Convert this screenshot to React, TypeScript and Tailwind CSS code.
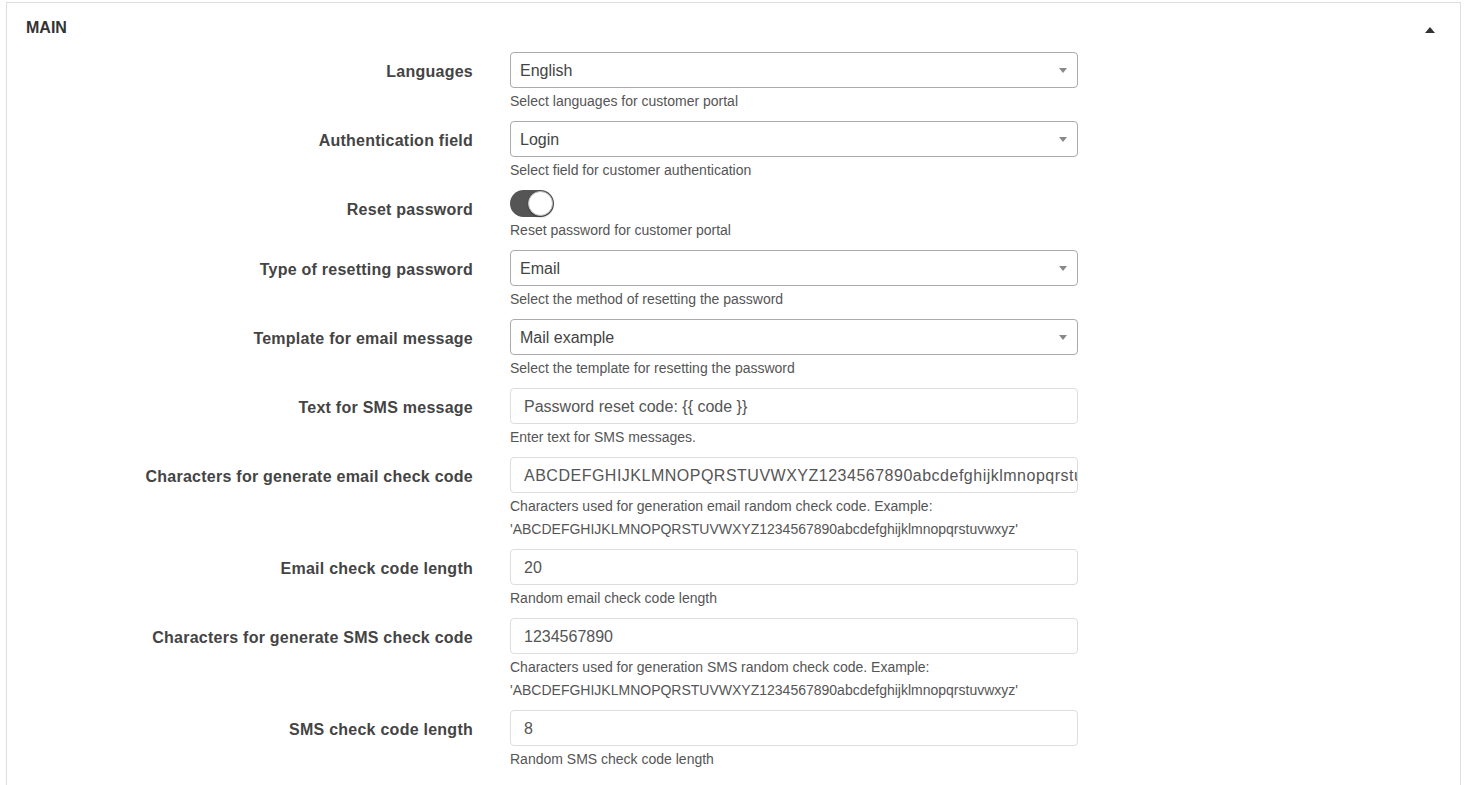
import React from 'react';

type Field = {
  label: string;
  kind: 'select' | 'text' | 'toggle';
  value?: string;
  wide?: boolean;
  help: string[];
};

const fields: Field[] = [
  { label: 'Languages', kind: 'select', value: 'English', help: ['Select languages for customer portal'] },
  { label: 'Authentication field', kind: 'select', value: 'Login', help: ['Select field for customer authentication'] },
  { label: 'Reset password', kind: 'toggle', help: ['Reset password for customer portal'] },
  { label: 'Type of resetting password', kind: 'select', value: 'Email', help: ['Select the method of resetting the password'] },
  { label: 'Template for email message', kind: 'select', value: 'Mail example', help: ['Select the template for resetting the password'] },
  { label: 'Text for SMS message', kind: 'text', value: 'Password reset code: {{ code }}', help: ['Enter text for SMS messages.'] },
  {
    label: 'Characters for generate email check code',
    kind: 'text',
    value: 'ABCDEFGHIJKLMNOPQRSTUVWXYZ1234567890abcdefghijklmnopqrstuvwxyz',
    wide: true,
    help: ['Characters used for generation email random check code. Example:', "'ABCDEFGHIJKLMNOPQRSTUVWXYZ1234567890abcdefghijklmnopqrstuvwxyz'"],
  },
  { label: 'Email check code length', kind: 'text', value: '20', help: ['Random email check code length'] },
  {
    label: 'Characters for generate SMS check code',
    kind: 'text',
    value: '1234567890',
    help: ['Characters used for generation SMS random check code. Example:', "'ABCDEFGHIJKLMNOPQRSTUVWXYZ1234567890abcdefghijklmnopqrstuvwxyz'"],
  },
  { label: 'SMS check code length', kind: 'text', value: '8', help: ['Random SMS check code length'] },
];

const Control = ({ field }: { field: Field }) => {
  if (field.kind === 'toggle') {
    return (
      <div className="h-[27px] flex items-start">
        <div className="w-[44px] h-[27px] rounded-full bg-[#555] relative">
          <div className="absolute right-[1px] top-[1px] w-[25px] h-[25px] rounded-full bg-white border border-[#bbb] shadow-[0_1px_2px_rgba(0,0,0,0.35)]" />
        </div>
      </div>
    );
  }
  if (field.kind === 'select') {
    return (
      <div className="h-9 rounded border border-[#aaa] bg-white flex items-center pl-[9px] pr-[10px] pt-[1px] text-[16px] text-[#444]">
        <span className="flex-1">{field.value}</span>
        <svg width="8" height="5" viewBox="0 0 8 5" className="-mt-[1px]">
          <path d="M0 0 L8 0 L4 5 Z" fill="#888" />
        </svg>
      </div>
    );
  }
  return (
    <div className="h-9 rounded border border-[#ddd] bg-white flex items-center pl-[13px] pr-[2px] pt-[2px] text-[16px] text-[#555] overflow-hidden whitespace-nowrap">
      <span className={field.wide ? 'tracking-[0.5px]' : ''}>{field.value}</span>
    </div>
  );
};

const App = () => {
  return (
    <div className="min-h-screen bg-white pt-[2px] pl-[6px]" style={{ fontFamily: '"Liberation Sans", Arial, sans-serif' }}>
      <div className="w-[1455px] border border-[#ddd] border-b-0 min-h-[790px]">
        {/* Header */}
        <div className="flex items-center justify-between pl-[19px] pr-[26px] pt-[15px] pb-[14px] h-[49px] box-border">
          <span className="text-[16px] leading-5 font-bold text-[#333]">MAIN</span>
          <svg width="10" height="6" viewBox="0 0 10 6" className="mt-[3px] -mr-[1px]">
            <path d="M0 6 L5 0 L10 6 Z" fill="#333" />
          </svg>
        </div>

        {/* Form rows */}
        <div className="flex flex-col">
          {fields.map((f) => (
            <div key={f.label} className="flex items-start mb-[8px]">
              <div className="w-[466px] h-[38px] flex items-center justify-end text-[16px] font-bold tracking-[0.25px] text-[#444] pt-[2px]">
                {f.label}
              </div>
              <div className="ml-[37px] w-[568px]">
                <Control field={f} />
                <div className="mt-[2px] text-[14px] leading-[23px] text-[#555]">
                  {f.help.map((h) => (
                    <div key={h}>{h}</div>
                  ))}
                </div>
              </div>
            </div>
          ))}
        </div>
      </div>
    </div>
  );
};

export default App;
